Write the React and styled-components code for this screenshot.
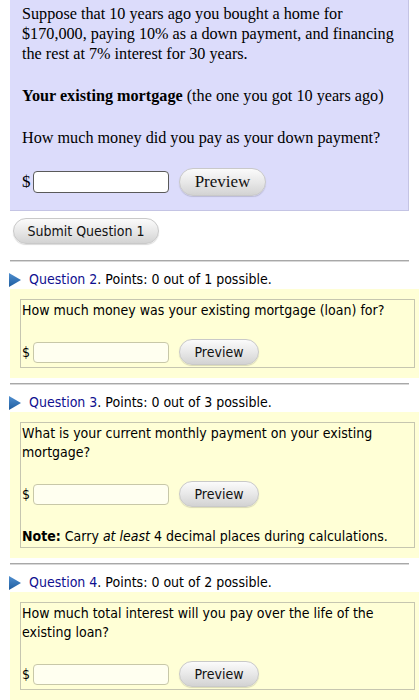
import styled, { createGlobalStyle } from 'styled-components';

const GlobalStyle = createGlobalStyle`
    body {
        margin: 0;
        background: #ffffff;
        color: #000000;
    }
`;

const sans = `Tahoma, "DejaVu Sans Condensed", "DejaVu Sans", sans-serif`;

const questions = [
    {
        num: 2,
        points: 1,
        text: 'How much money was your existing mortgage (loan) for?',
    },
    {
        num: 3,
        points: 3,
        text: 'What is your current monthly payment on your existing mortgage?',
        note: true,
    },
    {
        num: 4,
        points: 2,
        text: 'How much total interest will you pay over the life of the existing loan?',
    },
];

function App() {
    return (
        <Page>
            <GlobalStyle />
            <IntroBox>
                <SerifPara>
                    Suppose that 10 years ago you bought a home for $170,000, paying 10% as a
                    down payment, and financing the rest at 7% interest for 30 years.
                </SerifPara>
                <SerifPara>
                    <b>Your existing mortgage</b> (the one you got 10 years ago)
                </SerifPara>
                <SerifPara>How much money did you pay as your down payment?</SerifPara>
                <AnswerRow serif>
                    <Dollar serif>$</Dollar>
                    <AnswerInput serif />
                    <PreviewButton serif>Preview</PreviewButton>
                </AnswerRow>
            </IntroBox>

            <SubmitButton>Submit Question 1</SubmitButton>

            {questions.map((q, i) => (
                <div key={q.num}>
                    <Divider first={i === 0} />
                    <QuestionHead>
                        <svg width="12" height="14" viewBox="0 0 12 14">
                            <defs>
                                <linearGradient id={`tri${q.num}`} x1="0" y1="0" x2="0" y2="1">
                                    <stop offset="0" stopColor="#4f8fd0" />
                                    <stop offset="1" stopColor="#1e5c9e" />
                                </linearGradient>
                            </defs>
                            <polygon points="0,0 12,7 0,14" fill={`url(#tri${q.num})`} />
                        </svg>
                        <span>
                            <QLink>Question {q.num}</QLink>. Points: 0 out of {q.points} possible.
                        </span>
                    </QuestionHead>
                    <YellowBox>
                        <InnerBox>
                            <QText>{q.text}</QText>
                            <AnswerRow>
                                <Dollar>$</Dollar>
                                <AnswerInput />
                                <PreviewButton>Preview</PreviewButton>
                            </AnswerRow>
                            {q.note && (
                                <Note>
                                    <b>Note:</b> Carry <i>at least</i> 4 decimal places during calculations.
                                </Note>
                            )}
                        </InnerBox>
                    </YellowBox>
                </div>
            ))}
        </Page>
    );
}

export default App;

const Page = styled.div`
    padding: 0 10px;
    width: 399px;
    font-family: ${sans};
    font-size: 14px;
    line-height: 19px;
`;

const IntroBox = styled.div`
    background-color: #dcdcfb;
    border-right: 1px solid #c4c4e4;
    border-bottom: 1px solid #c4c4e4;
    padding: 4px 4px 14px 12px;
    font-family: "Liberation Serif", "Times New Roman", serif;
    font-size: 16.2px;
    line-height: 20px;
`;

const SerifPara = styled.p`
    margin: 0 0 22px 0;
`;

const AnswerRow = styled.div`
    display: flex;
    align-items: center;
    margin-top: ${p => (p.serif ? '-2px' : '0')};
`;

const Dollar = styled.span`
    font-family: ${p => (p.serif ? '"Liberation Serif", serif' : sans)};
    font-size: ${p => (p.serif ? '17px' : '14px')};
    width: 10px;
    margin-right: 1px;
`;

const AnswerInput = styled.input`
    box-sizing: border-box;
    width: 136px;
    height: ${p => (p.serif ? '22px' : '21px')};
    border: 1px solid ${p => (p.serif ? '#5a5a5a' : '#c8c8a8')};
    border-radius: 4px;
    background-color: ${p => (p.serif ? '#ffffff' : '#fffff0')};
    outline: none;
    padding: 0 4px;
`;

const PreviewButton = styled.button`
    box-sizing: border-box;
    margin-left: 10px;
    width: ${p => (p.serif ? '87px' : '80px')};
    height: ${p => (p.serif ? '28px' : '26px')};
    border-radius: 14px;
    border: 1px solid #c9c9c9;
    background: linear-gradient(#fbfbfb, #e6e6e6 55%, #d3d3d3);
    box-shadow: 0 1px 1px rgba(0, 0, 0, 0.15);
    font-family: ${p => (p.serif ? '"Liberation Serif", serif' : sans)};
    font-size: ${p => (p.serif ? '17px' : '14px')};
    color: #111;
    padding: 0;
`;

const SubmitButton = styled.button`
    box-sizing: border-box;
    margin: 7px 0 0 3px;
    width: 146px;
    height: 26px;
    border-radius: 13px;
    border: 1px solid #c9c9c9;
    background: linear-gradient(#fbfbfb, #e6e6e6 55%, #d3d3d3);
    box-shadow: 0 1px 1px rgba(0, 0, 0, 0.15);
    font-family: ${sans};
    font-size: 14px;
    color: #111;
    padding: 0;
`;

const Divider = styled.div`
    height: 1px;
    background-color: #a8a8a8;
    border-bottom: 1px solid #d8d8d8;
    margin: ${p => (p.first ? '16px' : '5px')} 0 8px 0;
`;

const QuestionHead = styled.div`
    display: flex;
    align-items: center;
    gap: 8px;
    height: 19px;

    svg {
        flex: none;
        margin-left: -1px;
    }
`;

const QLink = styled.span`
    color: #101090;
`;

const YellowBox = styled.div`
    margin-right: -10px;
    background-color: #ffffd6;
    padding: 10px 4px 10px 10px;
`;

const InnerBox = styled.div`
    border: 1px solid #c6c6b0;
    padding: 1px 1px 2px 1px;
`;

const QText = styled.p`
    margin: 0 0 19px 0;
`;

const Note = styled.p`
    margin: 20px 0 -1px 0;
`;
